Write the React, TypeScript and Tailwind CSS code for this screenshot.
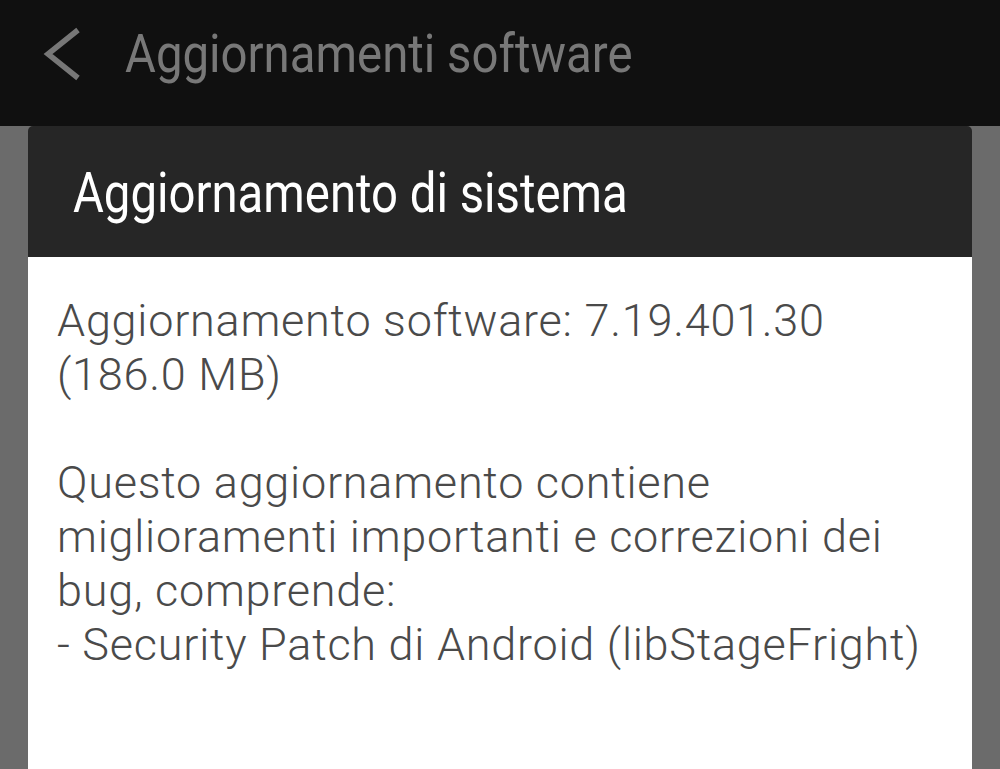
import React from 'react'

function BackChevron() {
  return (
    <svg width="40" height="56" viewBox="0 0 40 56" className="shrink-0">
      <polyline points="35,4 5,28 35,52" fill="none" stroke="#777777" strokeWidth="5.5" strokeLinejoin="miter" />
    </svg>
  )
}

export default function App() {
  return (
    <div className="h-screen w-full flex flex-col overflow-hidden bg-[#6b6b6b] font-['Roboto','Noto_Sans',sans-serif]">
      {/* Action bar */}
      <div className="h-[126px] shrink-0 bg-[#101010]">
        <div className="h-[108px] flex items-center pl-[43px]">
          <BackChevron />
          <span className="ml-[42px] inline-block origin-left scale-x-[0.885] whitespace-nowrap text-[53.5px] leading-none text-[#787878]">
            Aggiornamenti software
          </span>
        </div>
      </div>

      {/* Dialog */}
      <div className="flex-1 flex flex-col px-[28px]">
        <div className="flex-1 flex flex-col rounded-t-[5px] overflow-hidden">
          <div className="h-[131px] shrink-0 bg-[#262626] flex items-center px-[45px] pt-[3px]">
            <span className="inline-block origin-left scale-x-[0.86] whitespace-nowrap text-[55px] leading-none text-white">
              Aggiornamento di sistema
            </span>
          </div>
          <div className="flex-1 bg-white pt-[37px] pl-[29px] pr-[29px] text-[45px] leading-[54px] font-light tracking-[0.75px] text-[#4a4a4a]">
            <p>Aggiornamento software: 7.19.401.30 (186.0 MB)</p>
            <p className="mt-[54px]">
              Questo aggiornamento contiene miglioramenti importanti e correzioni dei bug, comprende:
              <br />- Security Patch di Android (libStageFright)
            </p>
          </div>
        </div>
      </div>
    </div>
  )
}
